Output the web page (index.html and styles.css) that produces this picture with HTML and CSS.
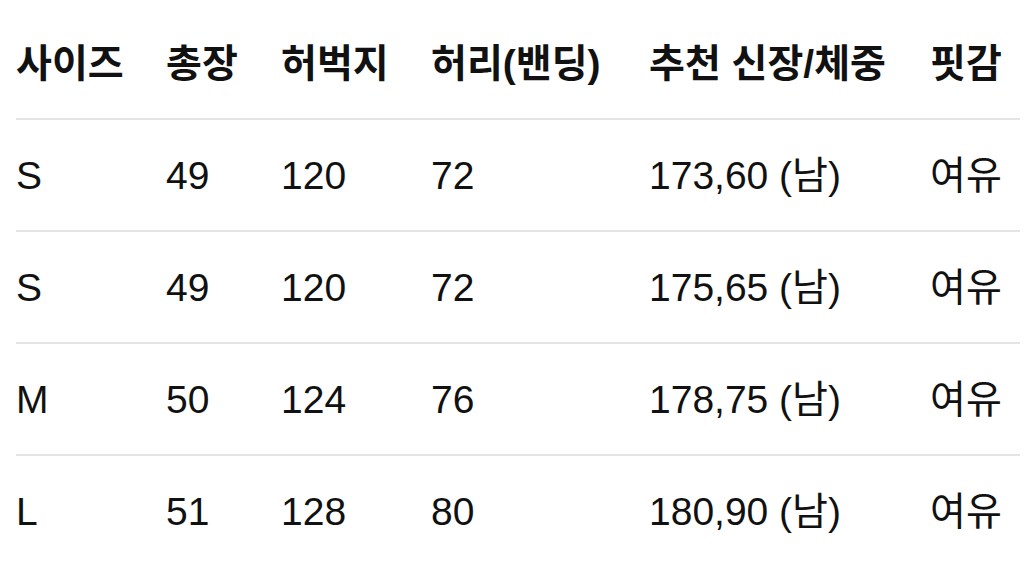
FILE: index.html
```html
<!DOCTYPE html>
<html lang="ko">
<head>
<meta charset="utf-8">
<link rel="stylesheet" href="styles.css">
</head>
<body>
<div class="size-table">
  <div class="row head">
    <div class="cell">사이즈</div>
    <div class="cell">총장</div>
    <div class="cell">허벅지</div>
    <div class="cell">허리(밴딩)</div>
    <div class="cell">추천 신장/체중</div>
    <div class="cell">핏감</div>
  </div>
  <div class="row">
    <div class="cell">S</div>
    <div class="cell">49</div>
    <div class="cell">120</div>
    <div class="cell">72</div>
    <div class="cell">173,60 (남)</div>
    <div class="cell">여유</div>
  </div>
  <div class="row">
    <div class="cell">S</div>
    <div class="cell">49</div>
    <div class="cell">120</div>
    <div class="cell">72</div>
    <div class="cell">175,65 (남)</div>
    <div class="cell">여유</div>
  </div>
  <div class="row">
    <div class="cell">M</div>
    <div class="cell">50</div>
    <div class="cell">124</div>
    <div class="cell">76</div>
    <div class="cell">178,75 (남)</div>
    <div class="cell">여유</div>
  </div>
  <div class="row last">
    <div class="cell">L</div>
    <div class="cell">51</div>
    <div class="cell">128</div>
    <div class="cell">80</div>
    <div class="cell">180,90 (남)</div>
    <div class="cell">여유</div>
  </div>
</div>
</body>
</html>
```
FILE: styles.css
```css
html, body {
  margin: 0;
  padding: 0;
  background: #ffffff;
}
body {
  font-family: "Liberation Sans", "Noto Sans CJK KR", sans-serif;
  color: #111111;
  font-size: 39px;
}
.size-table {
  margin-left: 16px;
  width: 1004px;
}
.row {
  display: grid;
  grid-template-columns: 150px 115px 150px 218px 281px 90px;
  align-items: center;
  height: 110px;
  border-bottom: 2px solid #e4e4e4;
}
.row.head {
  height: 120px;
  padding-top: 8px;
  box-sizing: border-box;
  font-weight: 600;
}
.row.last {
  border-bottom: none;
}
.cell {
  white-space: nowrap;
  line-height: 1;
}
```
